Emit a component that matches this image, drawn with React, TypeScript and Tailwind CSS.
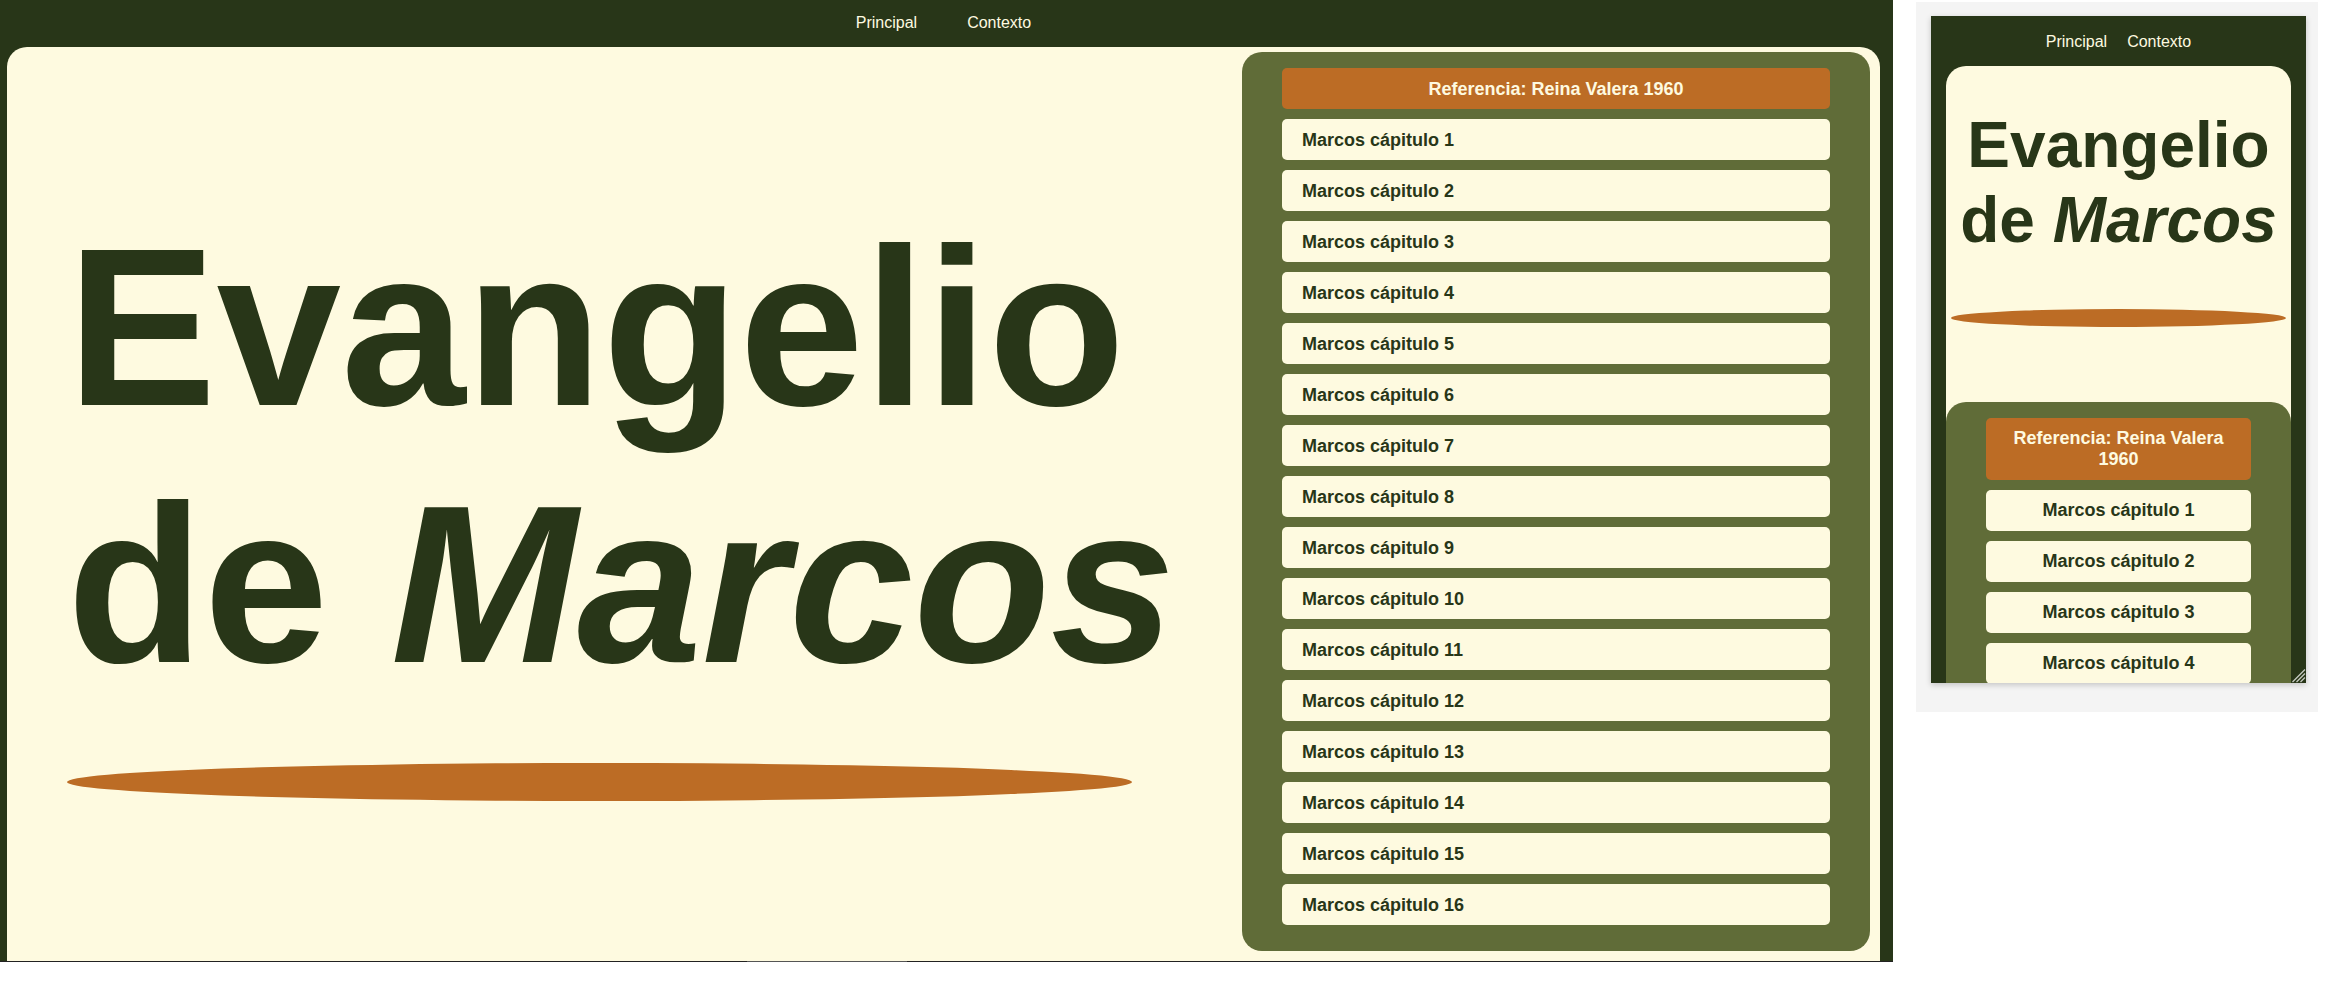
import React from "react";

const chapters = Array.from({ length: 16 }, (_, i) => i + 1);

const navLinks = ["Principal", "Contexto"];

function Nav({ className, label }: { className: string; label: string }) {
  return (
    <nav aria-label={label} className={`flex justify-center text-base leading-[18px] text-[#fefae0] ${className}`}>
      {navLinks.map((link) => (
        <a key={link} href="#" className="hover:underline">
          {link}
        </a>
      ))}
    </nav>
  );
}

function ChapterList({ count, itemClass, className }: { count: number; itemClass: string; className: string }) {
  return (
    <div className={`flex flex-col gap-2.5 bg-[#606c38] px-10 pt-4 pb-[26px] text-lg leading-[21px] font-bold ${className}`}>
      <h2 className={`rounded-[5px] bg-[#bc6c25] px-5 text-center text-[#fefae0] ${itemClass}`}>
        Referencia: Reina Valera 1960
      </h2>
      {chapters.slice(0, count).map((n) => (
        <a key={n} href={`#capitulo-${n}`} className={`rounded-[5px] bg-[#fefae0] px-5 text-[#283618] ${itemClass}`}>
          Marcos cápitulo {n}
        </a>
      ))}
    </div>
  );
}

function Title({ className }: { className: string }) {
  return (
    <h1 className={`font-bold whitespace-nowrap text-[#283618] ${className}`}>
      Evangelio
      <br />
      de <em>Marcos</em>
    </h1>
  );
}

function DesktopView() {
  return (
    <section className="min-w-0 flex-1">
      <div className="bg-[#283618] pr-[13px] pl-[7px]">
        <Nav label="Escritorio" className="gap-[50px] pt-3.5 pb-[15px]" />
        <div className="grid grid-cols-[1235fr_628fr] rounded-t-[20px] bg-[#fefae0] pt-[5px] pr-2.5 pb-2.5">
          <div className="min-w-0 pt-[147px] pl-[60px]">
            <Title className="text-[224px] leading-[257px]" />
            <hr className="mt-[50px] mr-[110px] h-[38px] rounded-[50%] border-0 bg-[#bc6c25]" />
          </div>
          <ChapterList count={16} itemClass="pt-[11px] pb-[9px]" className="rounded-[20px]" />
        </div>
      </div>
      <div className="flex h-px justify-center bg-[#222222] pr-60">
        <div className="w-40 bg-[#555555]" />
      </div>
    </section>
  );
}

function PhoneView() {
  return (
    <section className="mt-0.5 mr-[15px] ml-[23px] shrink-0 bg-[#f4f4f4] pt-3.5 pr-3 pb-[29px] pl-[15px]">
      <div className="relative h-[667px] w-[375px] overflow-hidden bg-[#283618] px-[15px] shadow-[0_2px_6px_rgba(0,0,0,0.2)]">
        <Nav label="Móvil" className="gap-5 pt-[17px] pb-[15px]" />
        <div className="rounded-t-[20px] bg-[#fefae0] pt-[42px] text-center">
          <Title className="text-[64px] leading-[75px]" />
          <hr className="mx-[5px] mt-[51px] mb-[75px] h-[18px] rounded-[50%] border-0 bg-[#bc6c25]" />
          <ChapterList count={4} itemClass="py-2.5" className="rounded-t-[20px]" />
        </div>
        <svg viewBox="0 0 15 15" className="absolute right-0 bottom-0 size-[15px]" aria-hidden="true">
          <path d="M1.5 14 14 1.5M5.5 14 14 5.5M9.5 14 14 9.5" stroke="#c4c8bf" strokeWidth="1.3" fill="none" />
        </svg>
      </div>
    </section>
  );
}

export default function App() {
  return (
    <main className="flex min-h-screen items-start bg-white font-['Liberation_Sans',Arial,sans-serif]">
      <DesktopView />
      <PhoneView />
    </main>
  );
}
